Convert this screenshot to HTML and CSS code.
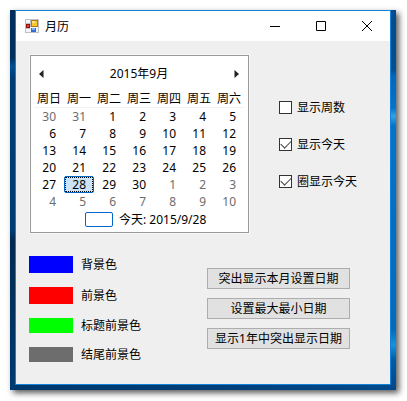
FILE: index.html
```
<!DOCTYPE html>
<html lang="zh-CN">
<head>
  <meta charset="UTF-8" />
  <meta name="viewport" content="width=device-width, initial-scale=1.0" />
  <title>月历</title>
  <link rel="stylesheet" href="styles.css">
</head>
<body>

  <div class="desktop">
    <div class="window">

      <header class="titlebar">
        <svg class="app-icon" width="14" height="14" viewBox="0 0 14 14">
          <rect width="14" height="14" fill="#bdc1c8" />
          <path d="M1 1h4v3H1zM1 10h4v3H1z" fill="#f4f5f7" />
          <rect x="5" y="8" width="8" height="5" fill="#eef2f8" />
          <rect x="6" y="1" width="7" height="7" fill="#b87a08" />
          <rect x="7" y="2" width="5" height="5" fill="#fbc62c" />
          <rect x="7" y="2" width="3" height="2" fill="#ffe48a" />
          <rect x="1" y="5" width="4" height="4" fill="#8f1010" />
          <rect x="2" y="6" width="2" height="2" fill="#d94a3a" />
          <rect x="6" y="9" width="5" height="4" fill="#2f6fd0" />
          <rect x="7" y="9" width="3" height="2" fill="#7fb0f5" />
        </svg>
        <h1 class="title">月历</h1>
        <button class="caption" type="button" aria-label="最小化">
          <svg width="10" height="10" viewBox="0 0 10 10"><path d="M0 5.5h10" /></svg>
        </button>
        <button class="caption" type="button" aria-label="最大化">
          <svg width="10" height="10" viewBox="0 0 10 10"><path d="M.5.5h9v9h-9z" /></svg>
        </button>
        <button class="caption" type="button" aria-label="关闭">
          <svg width="10" height="10" viewBox="0 0 10 10"><path d="M0 0l10 10M10 0L0 10" /></svg>
        </button>
      </header>

      <main class="client">
        <div class="row">
          <section class="calendar">
            <div class="month">
              <button class="nav" type="button" aria-label="上个月">
                <svg width="5" height="8" viewBox="0 0 5 8"><path d="M4.5 0v8L0 4z" /></svg>
              </button>
              <span>2015年9月</span>
              <button class="nav" type="button" aria-label="下个月">
                <svg width="5" height="8" viewBox="0 0 5 8"><path d="M.5 0v8L5 4z" /></svg>
              </button>
            </div>
            <table class="days">
              <thead>
                <tr><th>周日</th><th>周一</th><th>周二</th><th>周三</th><th>周四</th><th>周五</th><th>周六</th></tr>
              </thead>
              <tbody>
                <tr><td class="other">30</td><td class="other">31</td><td>1</td><td>2</td><td>3</td><td>4</td><td>5</td></tr>
                <tr><td>6</td><td>7</td><td>8</td><td>9</td><td>10</td><td>11</td><td>12</td></tr>
                <tr><td>13</td><td>14</td><td>15</td><td>16</td><td>17</td><td>18</td><td>19</td></tr>
                <tr><td>20</td><td>21</td><td>22</td><td>23</td><td>24</td><td>25</td><td>26</td></tr>
                <tr><td>27</td><td class="selected">28</td><td>29</td><td>30</td><td class="other">1</td><td class="other">2</td><td class="other">3</td></tr>
                <tr><td class="other">4</td><td class="other">5</td><td class="other">6</td><td class="other">7</td><td class="other">8</td><td class="other">9</td><td class="other">10</td></tr>
              </tbody>
            </table>
            <div class="today">
              <span class="today-box"></span>
              <span>今天: 2015/9/28</span>
            </div>
          </section>

          <div class="options">
            <label class="option"><input type="checkbox" name="week_numbers" />显示周数</label>
            <label class="option"><input type="checkbox" name="show_today" checked />显示今天</label>
            <label class="option"><input type="checkbox" name="circle_today" checked />圈显示今天</label>
          </div>
        </div>

        <div class="row">
          <ul class="colors">
            <li><span class="swatch back"></span>背景色</li>
            <li><span class="swatch fore"></span>前景色</li>
            <li><span class="swatch title-fore"></span>标题前景色</li>
            <li><span class="swatch trailing-fore"></span>结尾前景色</li>
          </ul>

          <div class="actions">
            <button class="btn" type="button">突出显示本月设置日期</button>
            <button class="btn" type="button">设置最大最小日期</button>
            <button class="btn" type="button">显示1年中突出显示日期</button>
          </div>
        </div>
      </main>

    </div>
  </div>

</body>
</html>
```

FILE: styles.css
```
* { box-sizing: border-box; }
body { margin: 0; padding: 10px 11px 11px 10px; background: #fff; color: #000; font: 12px/17px "Noto Sans", "Noto Sans CJK SC", sans-serif; }
button { padding: 0; border: none; background: none; color: inherit; font: inherit; }
svg { display: block; }

.desktop {
  padding: 0 5px 5px;
  background:
    linear-gradient(#002f5c, #002f5c 48px, #005094 56px, #003d74 68px, #003c74 220px, #002a50 230px, #003a70) left / 5px 100% no-repeat,
    linear-gradient(#004c8c, #004f92 60px, #0067bd 66px, #0074cc 98px, #2fa5e8 106px, #0074cc 116px, #006cc0 320px, #1593e0 335px, #005ba6 350px, #00478a) right / 5px 100% no-repeat,
    linear-gradient(90deg, #00386c, #003f78 50%, #004a8c) bottom / 100% 5px no-repeat;
  box-shadow: 3px 3px 6px rgba(0, 0, 0, 0.65);
}
.window { border: 1px solid #1480d8; background: #efefef; }

.titlebar { display: flex; align-items: center; height: 30px; padding-left: 9px; background: #fff; }
.title { flex: 1; margin: 0 0 0 6px; font-size: 12px; font-weight: normal; }
.caption { display: flex; align-items: center; justify-content: center; width: 46px; height: 30px; }
.caption svg { fill: none; stroke: #000; }
.caption:hover { background: #e5e5e5; }

.client { padding: 14px 14px 22px 13px; }
.row { display: flex; align-items: flex-start; }
.row + .row { margin-top: 23px; }

.calendar { margin-left: 1px; padding: 0 4px 0 3px; border: 1px solid #999; background: #fff; box-shadow: 0 0 0 1px #f8f8f8; }
.month { display: flex; align-items: center; justify-content: space-between; height: 35px; }
.nav { display: flex; justify-content: center; width: 14px; height: 8px; }
.nav svg { fill: #222; }
.days { border-collapse: separate; border-spacing: 0; }
.days th, .days td { width: 30px; height: 17px; padding: 0; line-height: 15px; }
.days th { padding-bottom: 1px; border-bottom: 1px solid #f3f3f3; font-weight: normal; line-height: 14px; text-align: center; }
.days td { padding-right: 8px; text-align: right; }
.days .other { color: #6d6d6d; }
.days .selected { padding-right: 7px; border: 1px solid #0066cc; border-radius: 2px; background: #cce4f7; outline: 1px dotted #000; outline-offset: -2px; }
.today { display: flex; align-items: center; gap: 6px; height: 22px; padding: 0 0 4px 51px; }
.today-box { width: 28px; height: 15px; border: 1px solid #0066cc; border-radius: 2px; }

.options { display: flex; flex-direction: column; gap: 20px; margin: 44px 0 0 30px; }
.option { display: flex; align-items: center; gap: 5px; }
.option input { appearance: none; width: 13px; height: 13px; margin: 0; border: 1px solid #333; background: #fff; }
.option input:checked::before { content: ""; display: block; width: 9px; height: 5px; margin: 1px; border: solid #444; border-width: 0 0 1px 1px; transform: rotate(-45deg); }

.colors { display: grid; gap: 14px; width: 178px; margin: 0; padding: 0; list-style: none; }
.colors li { display: flex; align-items: center; gap: 8px; line-height: 15px; }
.swatch { width: 44px; height: 17px; }
.back { background: #00f; }
.fore { background: #f00; }
.title-fore { height: 15px; background: #0f0; }
.trailing-fore { height: 15px; background: #6d6d6d; }

.actions { display: grid; gap: 9px; width: 143px; margin-top: 12px; }
.btn { height: 21px; border: 1px solid #adadad; background: #e1e1e1; line-height: 19px; white-space: nowrap; }
.btn:hover { border-color: #0078d7; background: #e5f1fb; }
```
